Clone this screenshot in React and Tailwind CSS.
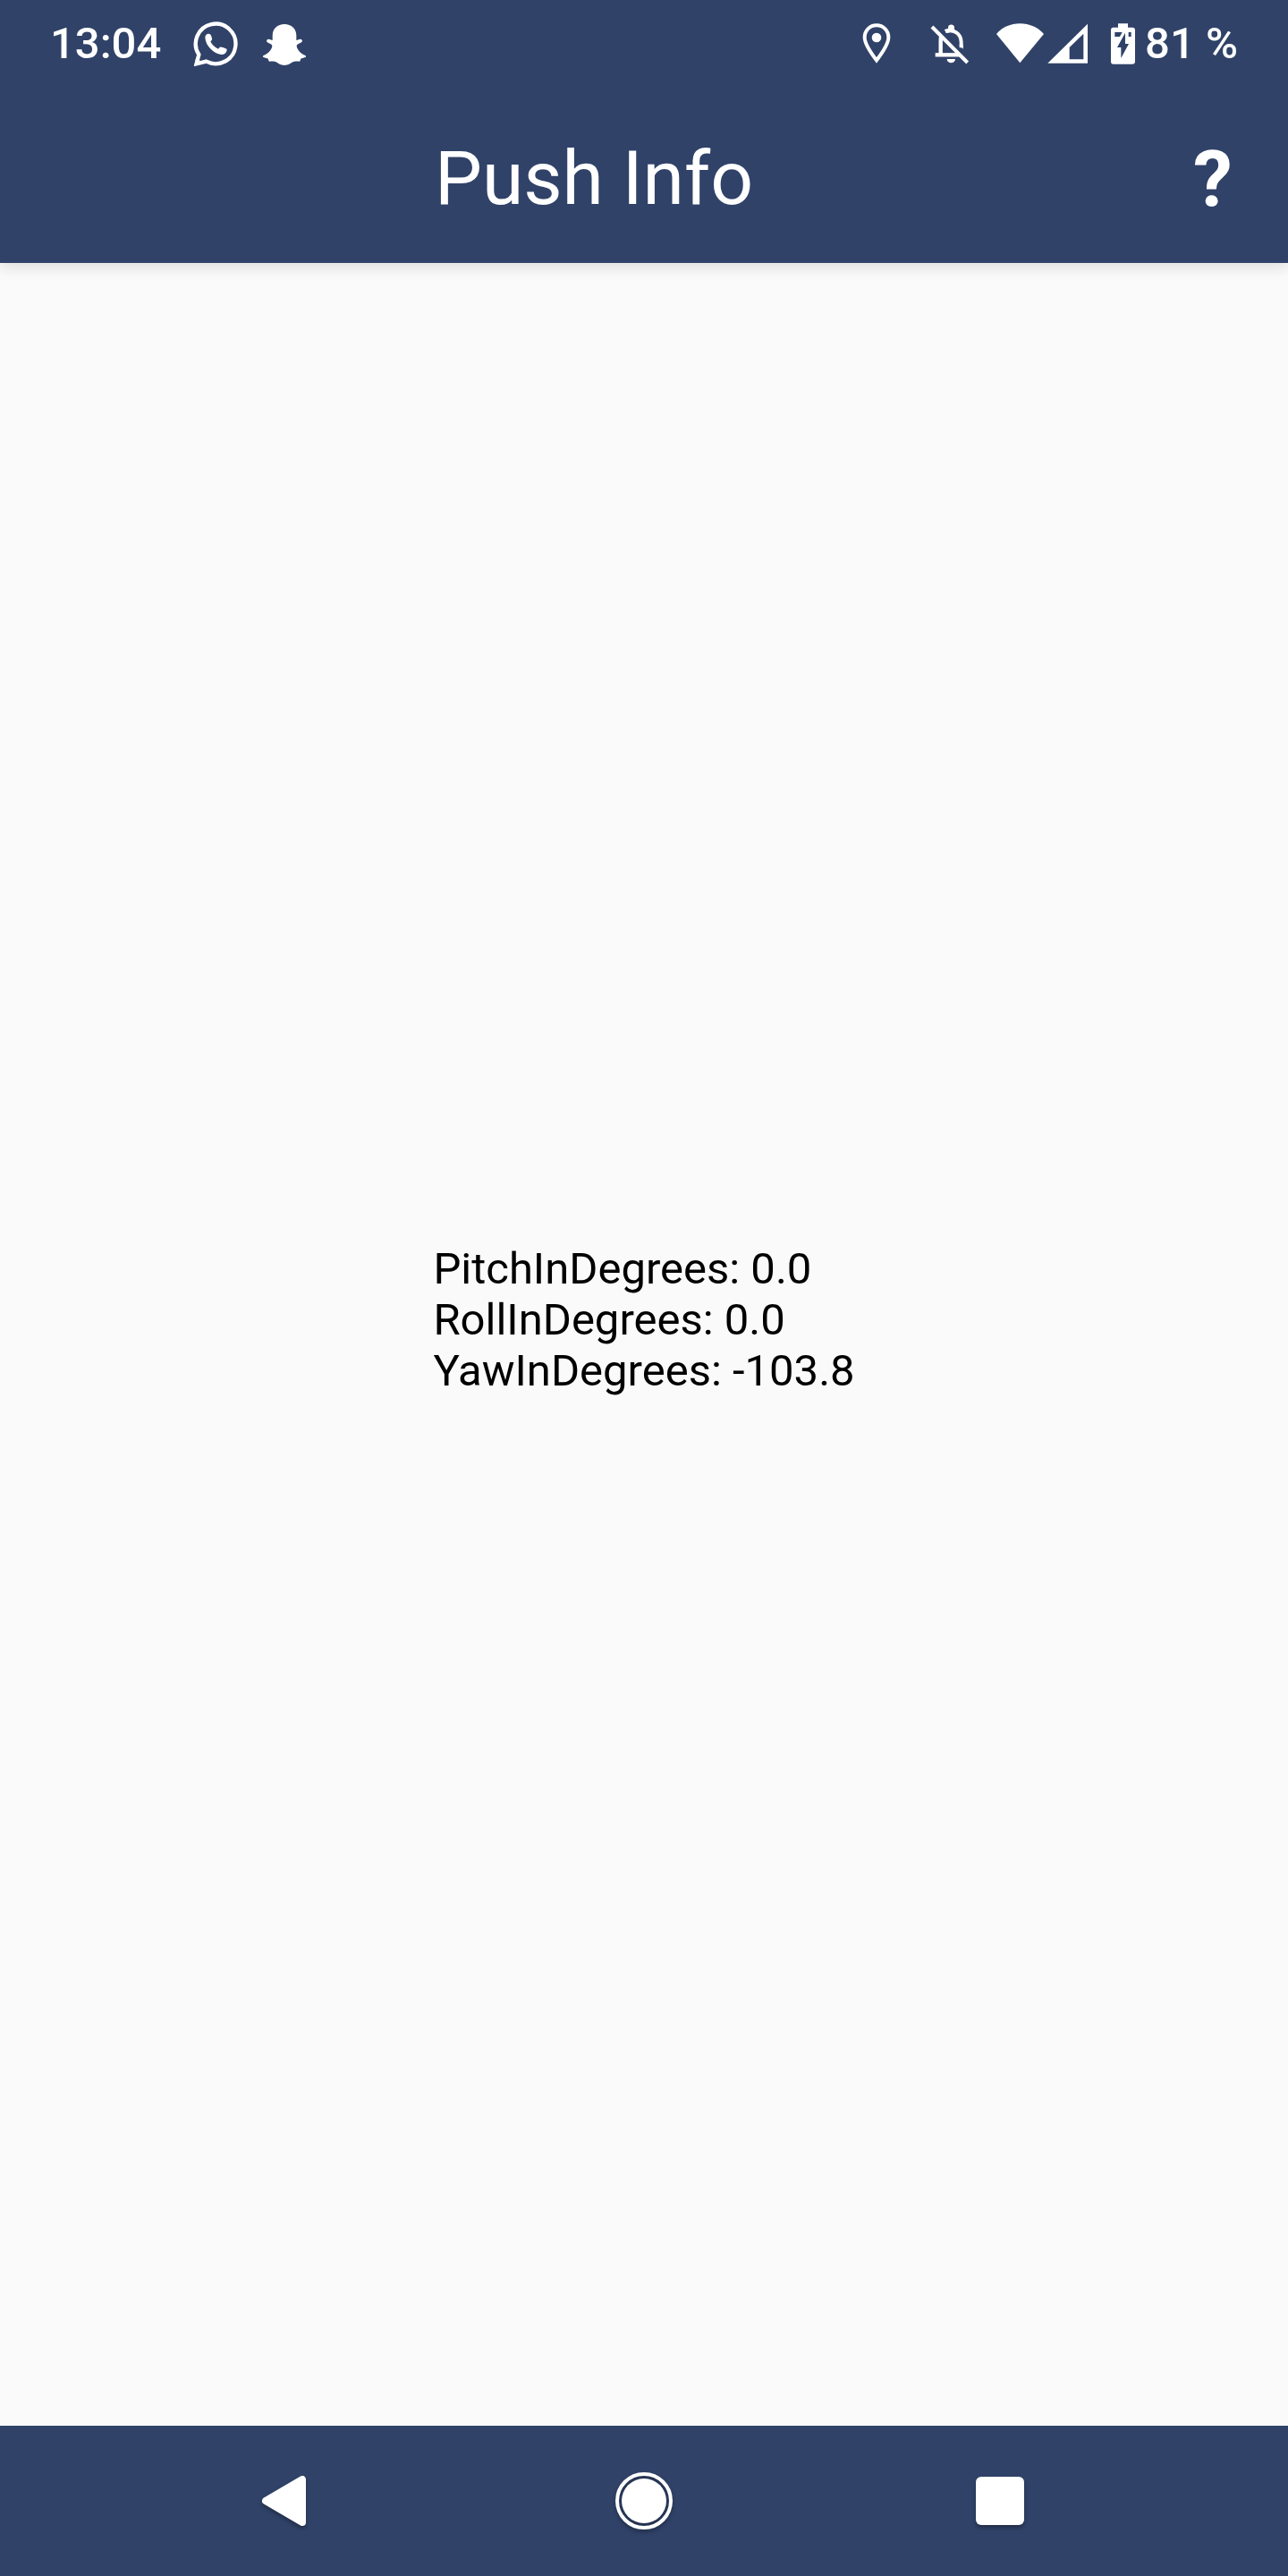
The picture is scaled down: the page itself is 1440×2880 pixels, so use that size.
const icon = "h-[50px] shrink-0";

function WhatsAppIcon() {
  return (
    <svg className={`${icon} w-[51px]`} viewBox="528 72 153 150" role="img" aria-label="WhatsApp">
      <path d="M572 206 A67 67 0 1 0 547 183 L539 214 Z" fill="none" stroke="#fff" strokeWidth="13" />
      <path d="M531 222 L538 192 L552 205 Z" fill="#fff" />
      <path
        d="M568 126 C568 118 575 112 582 114 C588 115 588 119 590 125 C592 132 592 133 586 139 C590 149 600 159 612 164 C618 156 620 156 627 159 C634 162 642 162 641 169 C639 179 631 184 622 183 C597 181 569 153 568 126 Z"
        fill="#fff"
      />
    </svg>
  );
}

function SnapchatIcon() {
  return (
    <svg className={`${icon} w-[50px]`} viewBox="760 72 150 150" role="img" aria-label="Snapchat" fill="#fff">
      <path d="M835 81 C858 81 875 96 875 119 L875 135 C881 135 886 130 891 132 C896 134 896 139 892 142 C887 146 876 148 876 155 C879 169 891 180 905 186 C908 188 908 191 905 192 C899 195 892 195 890 197 C888 200 889 205 885 206 C878 206 870 204 863 208 C854 213 848 219 835 219 C822 219 816 213 807 208 C800 204 792 206 785 206 C781 205 782 200 780 197 C778 195 771 195 765 192 C762 191 762 188 765 186 C779 180 791 169 794 155 C794 148 783 146 778 142 C774 139 774 134 779 132 C784 130 789 135 795 135 L795 119 C795 96 812 81 835 81 Z" />
    </svg>
  );
}

function PinIcon() {
  return (
    <svg className={`${icon} w-8`} viewBox="78 72 96 150" role="img" aria-label="Location">
      <path
        d="M126 85 C104 85 86 102 86 125 C86 150 110 181 126 202 C142 181 166 150 166 125 C166 102 148 85 126 85 Z"
        fill="none"
        stroke="#fff"
        strokeWidth="12"
      />
      <circle cx="126" cy="126" r="16" fill="#fff" />
    </svg>
  );
}

function BellOffIcon() {
  return (
    <svg className={`${icon} w-11`} viewBox="306 72 132 150" role="img" aria-label="Notifications muted">
      <path d="M312 90 L431 210" stroke="#fff" strokeWidth="12" fill="none" />
      <path d="M342 124 C341 130 341 136 341 142 L341 184" stroke="#fff" strokeWidth="13" fill="none" />
      <path d="M323 184 H405" stroke="#fff" strokeWidth="13" fill="none" />
      <path d="M357 105 C384 96 410 113 410 142 L410 160" stroke="#fff" strokeWidth="12" fill="none" />
      <path d="M353 100 L366 96 V92 C366 79 387 79 387 92 V98 L390 104 L362 111 Z" fill="#fff" />
      <path d="M362 198 H390 C390 205 384 211 376 211 C368 211 362 205 362 198 Z" fill="#fff" />
      <path d="M404 152 L416 164 V150 H404 Z" fill="#fff" />
    </svg>
  );
}

function WifiIcon() {
  return (
    <svg className={`${icon} w-[54px]`} viewBox="528 72 162 150" role="img" aria-label="Wi-Fi" fill="#fff">
      <path d="M607 211 L528 114 C548 91 576 79 607 79 C638 79 666 91 687 114 Z" />
    </svg>
  );
}

function SignalIcon() {
  return (
    <svg className={`${icon} w-[46px]`} viewBox="699 72 138 150" role="img" aria-label="Mobile signal">
      <path
        fill="#fff"
        fillRule="evenodd"
        d="M834 80 V212 H700 Z M820 113 L773 159 V199 H820 Z"
      />
    </svg>
  );
}

function BatteryIcon() {
  return (
    <svg className={`${icon} w-[29px]`} viewBox="306 72 87 150" role="img" aria-label="Battery charging">
      <path
        fill="#fff"
        d="M333 79 H366 V92 H381 Q390 92 390 101 V206 Q390 215 381 215 H317 Q309 215 309 206 V101 Q309 92 317 92 H333 Z"
      />
      <path fill="#304268" d="M322 108 H347 L339 123 H322 Z M368 108 H377 V123 H368 Z" />
      <path fill="#304268" d="M357 110 V147 H369 L343 195 V159 H330 Z" />
    </svg>
  );
}

function StatusBar() {
  return (
    <div className="flex h-[98px] items-center justify-between px-14 text-[49px] leading-[56px] font-medium">
      <div className="flex items-center">
        <time>13:04</time>
        <div className="ml-9 flex items-center gap-[26px]">
          <WhatsAppIcon />
          <SnapchatIcon />
        </div>
      </div>
      <div className="flex items-center">
        <div className="mr-[30px] flex items-center gap-11">
          <PinIcon />
          <BellOffIcon />
        </div>
        <div className="mr-6 flex items-center gap-[3px]">
          <WifiIcon />
          <SignalIcon />
        </div>
        <div className="flex items-center gap-2.5">
          <BatteryIcon />
          <span>81 %</span>
        </div>
      </div>
    </div>
  );
}

function NavBar() {
  const button = "flex h-full items-center justify-center";
  const art = "size-16 overflow-visible drop-shadow-[0_3px_2px_rgba(0,0,0,0.3)]";
  return (
    <nav className="grid h-[168px] shrink-0 grid-cols-3 bg-[#304268] px-[123px]">
      <button type="button" aria-label="Back" className={button}>
        <svg className={art} viewBox="0 0 64 64">
          <path d="M7 32 L48 8 V56 Z" fill="#fff" stroke="#fff" strokeWidth="8" strokeLinejoin="round" />
        </svg>
      </button>
      <button type="button" aria-label="Home" className={button}>
        <svg className={art} viewBox="0 0 64 64">
          <circle cx="32" cy="32" r="30" fill="none" stroke="#fff" strokeWidth="4" />
          <circle cx="32" cy="32" r="25" fill="#fff" />
        </svg>
      </button>
      <button type="button" aria-label="Recent apps" className={button}>
        <svg className={art} viewBox="0 0 64 64">
          <rect x="5" y="5" width="54" height="54" rx="6" fill="#fff" />
        </svg>
      </button>
    </nav>
  );
}

export default function App() {
  return (
    <div className="flex min-h-screen flex-col bg-[#fafafa] font-[Roboto,sans-serif] text-black">
      <header className="shrink-0 bg-[#304268] text-white shadow-[0_4px_16px_rgba(0,0,0,0.13)]">
        <StatusBar />
        <div className="flex h-[196px] items-center pt-2">
          <h1 className="flex-1 text-center text-[84px] leading-[98px] font-normal">Push Info</h1>
          <button type="button" aria-label="Help" className="mr-14 w-14 text-[88px] leading-[98px] font-bold">
            ?
          </button>
        </div>
      </header>
      <main className="flex flex-1 items-center justify-center pb-14 text-[49px] leading-[57px]">
        <div>
          <p>PitchInDegrees: 0.0</p>
          <p>RollInDegrees: 0.0</p>
          <p>YawInDegrees: -103.8</p>
        </div>
      </main>
      <NavBar />
    </div>
  );
}
